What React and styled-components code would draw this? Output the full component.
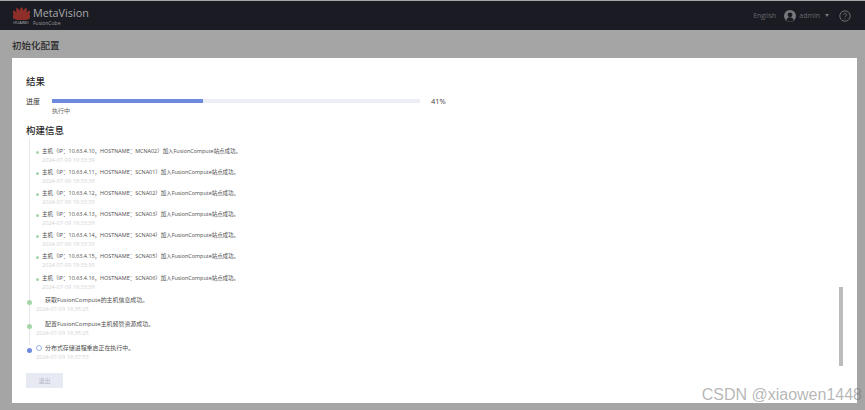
import React from 'react';
import styled, { createGlobalStyle } from 'styled-components';

const GlobalStyle = createGlobalStyle`
    html, body {
        margin: 0;
        padding: 0;
        background: #a5a5a5;
    }
    body {
        font-family: "Open Sans", "Noto Sans CJK SC", sans-serif;
    }
`;

const Page = styled.div`
    position: relative;
    width: 865px;
    height: 410px;
    overflow: hidden;
    display: flex;
    flex-direction: column;
`;

const TopBar = styled.header`
    height: 29px;
    margin-top: 1px;
    background: #1b1c23;
    display: flex;
    align-items: center;
    padding: 0 14px 0 12px;
    flex-shrink: 0;
`;

const Logo = styled.div`
    display: flex;
    flex-direction: column;
    align-items: center;
    width: 18px;
    margin-right: 3px;
`;

const LogoWord = styled.span`
    font-size: 4px;
    line-height: 5px;
    color: #b4b4b6;
`;

const Brand = styled.div`
    display: flex;
    flex-direction: column;
`;

const BrandName = styled.span`
    font-size: 10.8px;
    line-height: 14px;
    color: #a9a9ab;
`;

const BrandSub = styled.span`
    font-size: 5px;
    line-height: 6px;
    color: #9a9a9c;
`;

const TopRight = styled.div`
    margin-left: auto;
    display: flex;
    align-items: center;
    color: #66676c;
    font-size: 7px;
`;

const Language = styled.span`
    margin-right: 8px;
`;

const Avatar = styled.svg`
    width: 12px;
    height: 12px;
    margin-right: 3px;
`;

const Caret = styled.i`
    margin-left: 5px;
    width: 0;
    height: 0;
    border-left: 2px solid transparent;
    border-right: 2px solid transparent;
    border-top: 3px solid #77787d;
`;

const HelpIcon = styled.svg`
    width: 12px;
    height: 12px;
    margin-left: 10px;
`;

const Title = styled.h1`
    margin: 0;
    height: 28px;
    padding-left: 12px;
    font-size: 9.5px;
    font-weight: 500;
    line-height: 31px;
    color: #2b2b2b;
    flex-shrink: 0;
`;

const Card = styled.main`
    position: relative;
    margin: 0 8px 0 12px;
    height: 345px;
    background: #fff;
    padding: 17px 14px 0;
    box-sizing: border-box;
`;

const SectionTitle = styled.h2`
    margin: 0;
    font-size: 9.5px;
    font-weight: 500;
    line-height: 14px;
    color: #2a2a2a;
`;

const ProgressRow = styled.div`
    display: flex;
    align-items: center;
    margin-top: 6px;
    height: 12px;
`;

const ProgressLabel = styled.span`
    width: 26px;
    font-size: 7px;
    color: #333;
`;

const Track = styled.div`
    width: 368px;
    height: 4px;
    background: #eceef5;
`;

const Fill = styled.div`
    height: 100%;
    background: #6d8ae0;
`;

const Percent = styled.span`
    margin-left: 11px;
    font-size: 7.5px;
    color: #444;
`;

const Status = styled.div`
    margin: -1px 0 8px 26px;
    font-size: 6px;
    line-height: 10px;
    color: #666;
`;

const Timeline = styled.div`
    position: relative;
    margin-top: 1px;
    height: 228px;
`;

const Rail = styled.div`
    position: absolute;
    left: 3px;
    top: 0;
    bottom: 22px;
    width: 1px;
    background: #e6e6e8;
`;

const SubList = styled.div`
    display: flex;
    flex-direction: column;
    padding: 7.5px 0 1.4px 10px;
`;

const SubItem = styled.div`
    height: 21.2px;
`;

const StepItem = styled.div`
    position: relative;
    height: 24px;
    padding-left: 10px;
`;

const Message = styled.div`
    position: relative;
    font-size: ${p => (p.$small ? '5.45px' : '5.95px')};
    line-height: 9px;
    color: #4c4c4c;
    padding-left: ${p => (p.$indent ? '9px' : '6px')};
    white-space: nowrap;
`;

const SmallDot = styled.i`
    position: absolute;
    left: 0;
    top: 4px;
    width: 3px;
    height: 3px;
    border-radius: 50%;
    background: #a5d6a7;
`;

const Dot = styled.i`
    position: absolute;
    left: 0.5px;
    top: 3.5px;
    width: 5px;
    height: 5px;
    border-radius: 50%;
    background: ${p => p.$color};
`;

const Spinner = styled.i`
    position: absolute;
    left: 10px;
    top: 1px;
    width: 4px;
    height: 4px;
    border: 1px solid #9db4ea;
    border-radius: 50%;
`;

const Time = styled.div`
    font-size: 5.6px;
    line-height: 8px;
    color: #d3d3d6;
    padding-left: ${p => (p.$step ? '0' : '6px')};
`;

const Scrollbar = styled.div`
    position: absolute;
    right: 14px;
    top: 229px;
    width: 4px;
    height: 79px;
    background: #bcbcbc;
`;

const ExitButton = styled.button`
    display: block;
    width: 37px;
    height: 15px;
    margin-top: 6px;
    border: 0;
    padding: 0;
    background: #e8eaf3;
    color: #b5b8c4;
    font-family: inherit;
    font-size: 6px;
`;

const Watermark = styled.div`
    position: absolute;
    right: 3px;
    top: 386px;
    font-family: "Liberation Sans", sans-serif;
    font-size: 16px;
    line-height: 18px;
    color: rgba(120, 120, 120, 0.55);
    white-space: nowrap;
`;

const hosts = [
    { ip: '10.63.4.10', name: 'MCNA02', time: '2024-07-09 19:33:39' },
    { ip: '10.63.4.11', name: 'SCNA01', time: '2024-07-09 19:33:39' },
    { ip: '10.63.4.12', name: 'SCNA02', time: '2024-07-09 19:33:39' },
    { ip: '10.63.4.13', name: 'SCNA03', time: '2024-07-09 19:33:39' },
    { ip: '10.63.4.14', name: 'SCNA04', time: '2024-07-09 19:33:39' },
    { ip: '10.63.4.15', name: 'SCNA05', time: '2024-07-09 19:33:39' },
    { ip: '10.63.4.16', name: 'SCNA06', time: '2024-07-09 19:33:39' },
];

const HuaweiMark = () => (
    <svg width="17" height="13" viewBox="-9 -14 18 14">
        {[-66, -44, -22, 0, 22, 44, 66].map(angle => (
            <ellipse key={angle} cx="0" cy="-7" rx="2.1" ry="6.8" fill="#8f2f2a" transform={`rotate(${angle} 0 0)`} />
        ))}
    </svg>
);

const App = () => (
    <Page>
        <GlobalStyle />
        <TopBar>
            <Logo>
                <HuaweiMark />
                <LogoWord>HUAWEI</LogoWord>
            </Logo>
            <Brand>
                <BrandName>MetaVision</BrandName>
                <BrandSub>FusionCube</BrandSub>
            </Brand>
            <TopRight>
                <Language>English</Language>
                <Avatar viewBox="0 0 12 12">
                    <circle cx="6" cy="6" r="6" fill="#77787d" />
                    <circle cx="6" cy="4.8" r="2.4" fill="#1b1c23" />
                    <path d="M2.2 10.2c.6-2 2.1-3 3.8-3s3.2 1 3.8 3a6 6 0 0 1-7.6 0z" fill="#1b1c23" />
                </Avatar>
                <span>admin</span>
                <Caret />
                <HelpIcon viewBox="0 0 12 12" fill="none" stroke="#6d6e73">
                    <circle cx="6" cy="6" r="5.2" />
                    <path d="M4.5 4.7a1.5 1.5 0 1 1 2.3 1.3c-.5.3-.8.6-.8 1.2M6 8.4v.8" />
                </HelpIcon>
            </TopRight>
        </TopBar>
        <Title>初始化配置</Title>
        <Card>
            <SectionTitle>结果</SectionTitle>
            <ProgressRow>
                <ProgressLabel>进度</ProgressLabel>
                <Track>
                    <Fill style={{ width: '41%' }} />
                </Track>
                <Percent>41%</Percent>
            </ProgressRow>
            <Status>执行中</Status>
            <SectionTitle>构建信息</SectionTitle>
            <Timeline>
                <Rail />
                <SubList>
                    {hosts.map(host => (
                        <SubItem key={host.ip}>
                            <Message $small>
                                <SmallDot />
                                主机（IP：{host.ip}，HOSTNAME：{host.name}）加入FusionCompute站点成功。
                            </Message>
                            <Time>{host.time}</Time>
                        </SubItem>
                    ))}
                </SubList>
                <StepItem>
                    <Dot $color="#a5d6a7" />
                    <Message $indent>获取FusionCompute的主机信息成功。</Message>
                    <Time $step>2024-07-09 19:35:25</Time>
                </StepItem>
                <StepItem>
                    <Dot $color="#a5d6a7" />
                    <Message $indent>配置FusionCompute主机频管资源成功。</Message>
                    <Time $step>2024-07-09 19:35:25</Time>
                </StepItem>
                <StepItem>
                    <Dot $color="#6d8ae0" />
                    <Spinner />
                    <Message $indent>分布式存储进程重启正在执行中。</Message>
                    <Time $step>2024-07-09 19:37:53</Time>
                </StepItem>
            </Timeline>
            <ExitButton disabled>退出</ExitButton>
            <Scrollbar />
        </Card>
        <Watermark>CSDN @xiaowen1448</Watermark>
    </Page>
);

export default App;
